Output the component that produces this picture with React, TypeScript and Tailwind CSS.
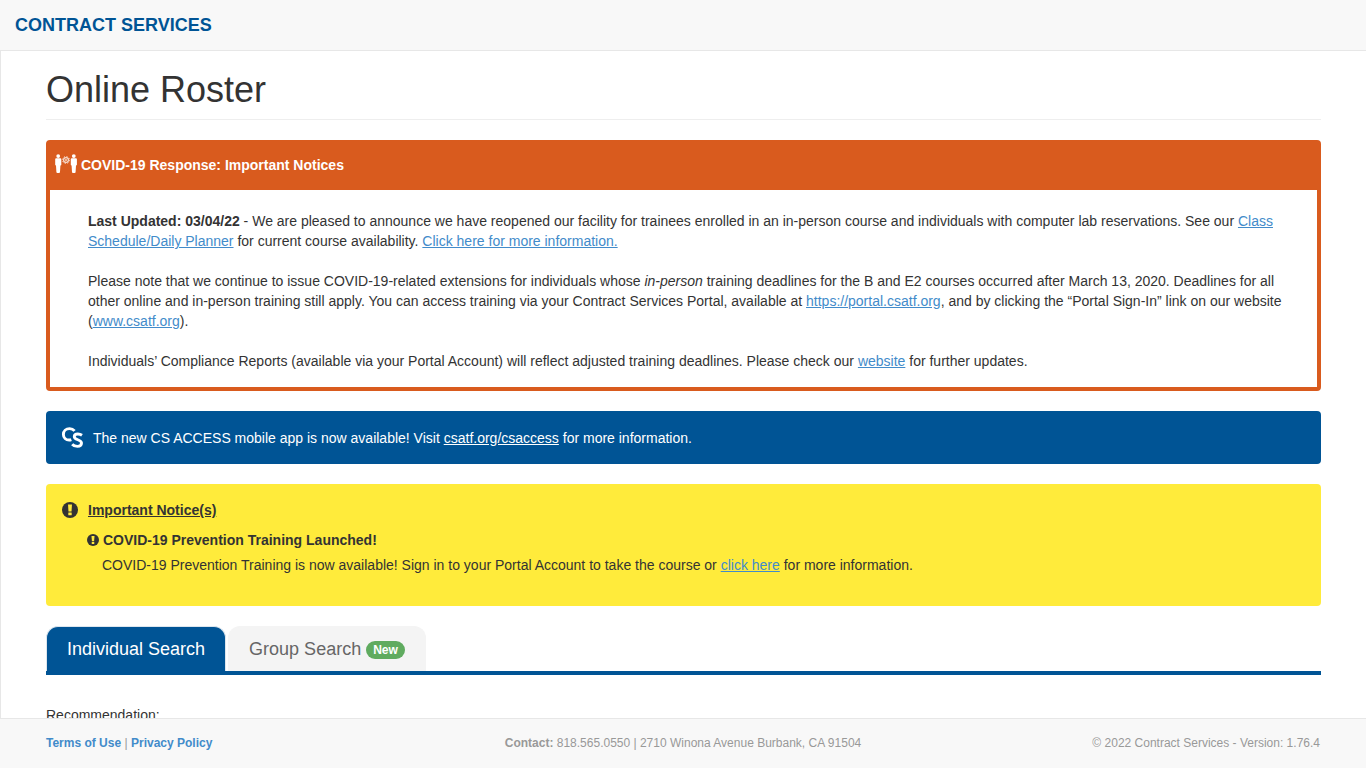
import { useState } from 'react';
import type { ReactNode } from 'react';

interface TextLinkProps {
  href: string;
  children: ReactNode;
}

function TextLink({ href, children }: TextLinkProps) {
  return (
    <a href={href} className="text-[#428bca] underline hover:text-[#2a6496]">
      {children}
    </a>
  );
}

function DistanceIcon() {
  return (
    <svg viewBox="0 0 22 22" className="w-[22px] h-[22px] shrink-0" fill="#fff" aria-hidden="true">
      <circle cx="3.2" cy="2.1" r="1.900" />
      <path d="M1.100 4.300h4.200q1 0 1 1v5.500q0 .8-.9.8L5 18q0 1-1 1H2.400q-1 0-1-1l-.4-6.400q-.8 0-.8-.8V5.300q0-1 .9-1z" />
      <circle cx="18.800" cy="2.1" r="1.900" />
      <path d="M16.700 4.300h4.200q1 0 1 1v5.500q0 .8-.9.8l-.4 6.400q0 1-1 1H18q-1 0-1-1l-.4-6.400q-.8 0-.8-.8V5.300q0-1 .9-1z" />
      <circle cx="11" cy="6" r="2.400" fill="none" stroke="#fff" strokeWidth="1.200" strokeOpacity="0.8" />
      <circle cx="11" cy="6" r=".9" fillOpacity="0.8" />
      <circle cx="11" cy="6" r="3.500" fill="none" stroke="#fff" strokeOpacity="0.7" strokeDasharray="1.300 1.450" />
    </svg>
  );
}

function CsLogo() {
  return (
    <svg
      viewBox="0 0 22 22"
      className="w-[22px] h-[22px] shrink-0"
      fill="none"
      stroke="#fff"
      strokeWidth="2.900"
      aria-hidden="true"
    >
      <path d="M13.600 3.900C12.200 2.300 10.600 1.600 8.600 1.600C4.900 1.600 2.400 4 2.400 7.400C2.400 10.900 4.900 13 8.200 13C9 13 9.600 12.900 10.300 12.600" />
      <path d="M21 8.300C19.700 7.400 18.300 7 16.900 7C14.600 7 13.300 8 13.300 9.700C13.300 13.400 20.500 12.100 20.500 16.100C20.500 18.400 18.700 19.400 16.400 19.400C14.300 19.400 12.500 18.700 11.200 17.200" />
    </svg>
  );
}

function ExclamationIcon({ className }: { className: string }) {
  return (
    <svg viewBox="0 0 16 16" className={className} aria-hidden="true">
      <circle cx="8" cy="8" r="8" fill="#333" />
      <path d="M6 2.600h4l-.5 6.800h-3z" fill="#ffeb3b" />
      <rect x="6.300" y="10.400" width="3.400" height="2.900" rx=".4" fill="#ffeb3b" />
    </svg>
  );
}

export default function App() {
  const [tab, setTab] = useState<'individual' | 'group'>('individual');

  const tabClass = (active: boolean) =>
    `flex items-center gap-[5px] px-5 py-2.5 text-lg leading-6 rounded-t-xl border border-b-0 cursor-pointer ${
      active ? 'bg-[#005495] border-[#dde6ee] text-white' : 'bg-[#f4f4f4] border-[#f4f4f4] text-[#666]'
    }`;

  return (
    <div className="h-screen flex flex-col bg-white text-[#333] text-sm leading-5 font-['Liberation_Sans',Arial,sans-serif]">
      {/* Top bar */}
      <header className="shrink-0 bg-[#f8f8f8] border-b border-[#e7e7e7] px-[15px] py-[15px]">
        <a href="#" className="block text-lg leading-5 font-bold text-[#005495]">
          CONTRACT SERVICES
        </a>
      </header>

      <main className="flex-1 min-h-0 overflow-y-auto [scrollbar-width:none] border-l border-[#e7e7e7] pl-[45px] pr-[45px] pt-[19px]">
        <h1 className="text-4xl leading-10 pb-[9px] mb-5 border-b border-[#eee]">Online Roster</h1>

        {/* COVID notice */}
        <section className="mb-5 rounded border-4 border-[#d95b1e]">
          <h2 className="flex items-center gap-1 h-[46px] pl-[5px] pb-1 bg-[#d95b1e] text-white font-bold">
            <DistanceIcon />
            <span>COVID-19 Response: Important Notices</span>
          </h2>
          <div className="pl-[38px] pr-[15px] pt-[21px] pb-4 space-y-5">
            <p>
              <b>Last Updated: 03/04/22</b> - We are pleased to announce we have reopened our facility for trainees
              enrolled in an in-person course and individuals with computer lab reservations. See our{' '}
              <TextLink href="#schedule">Class Schedule/Daily Planner</TextLink> for current course availability.{' '}
              <TextLink href="#more">Click here for more information.</TextLink>
            </p>
            <p>
              Please note that we continue to issue COVID-19-related extensions for individuals whose <i>in-person</i>{' '}
              training deadlines for the B and E2 courses occurred after March 13, 2020. Deadlines for all other online
              and in-person training still apply. You can access training via your Contract Services Portal, available
              at <TextLink href="https://portal.csatf.org">https://portal.csatf.org</TextLink>, and by clicking the
              “Portal Sign-In” link on our website (<TextLink href="https://www.csatf.org">www.csatf.org</TextLink>).
            </p>
            <p>
              Individuals’ Compliance Reports (available via your Portal Account) will reflect adjusted training
              deadlines. Please check our <TextLink href="https://www.csatf.org">website</TextLink> for further
              updates.
            </p>
          </div>
        </section>

        {/* Mobile app banner */}
        <section className="flex items-center gap-2.5 mb-5 px-[15px] pt-4 pb-[15px] rounded bg-[#005495] text-white">
          <CsLogo />
          <p>
            The new CS ACCESS mobile app is now available! Visit{' '}
            <a href="https://www.csatf.org/csaccess" className="underline">
              csatf.org/csaccess
            </a>{' '}
            for more information.
          </p>
        </section>

        <section className="mb-5 pl-4 pr-4 pt-4 pb-[31px] rounded bg-[#ffeb3b]">
          <h2 className="flex items-center gap-2.5 font-bold">
            <ExclamationIcon className="w-4 h-4 shrink-0" />
            <span className="underline">Important Notice(s)</span>
          </h2>
          <div className="pl-[25px] pt-2.5">
            <h3 className="flex items-center gap-1 font-bold">
              <ExclamationIcon className="w-3 h-3 shrink-0" />
              COVID-19 Prevention Training Launched!
            </h3>
            <p className="pl-[15px] pt-[5px]">
              COVID-19 Prevention Training is now available! Sign in to your Portal Account to take the course or{' '}
              <TextLink href="#prevention">click here</TextLink> for more information.
            </p>
          </div>
        </section>

        {/* Search tabs */}
        <div role="tablist" className="flex gap-0.5 mb-[30px] border-b-4 border-[#005495]">
          <button
            role="tab"
            aria-selected={tab === 'individual'}
            onClick={() => setTab('individual')}
            className={tabClass(tab === 'individual')}
          >
            Individual Search
          </button>
          <button
            role="tab"
            aria-selected={tab === 'group'}
            onClick={() => setTab('group')}
            className={tabClass(tab === 'group')}
          >
            Group Search
            <span className="mt-0.5 px-[7px] py-[3px] rounded-full bg-[#5fab5f] text-white text-xs leading-3 font-bold">
              New
            </span>
          </button>
        </div>

        <p>Recommendation:</p>
      </main>

      <footer className="shrink-0 grid grid-cols-3 items-center h-[50px] px-[46px] pb-0.5 bg-[#f8f8f8] border-t border-[#e7e7e7] text-xs text-[#999]">
        <nav>
          <a href="#terms" className="font-bold text-[#428bca]">
            Terms of Use
          </a>{' '}
          |{' '}
          <a href="#privacy" className="font-bold text-[#428bca]">
            Privacy Policy
          </a>
        </nav>
        <p className="text-center">
          <b>Contact:</b> 818.565.0550 | 2710 Winona Avenue Burbank, CA 91504
        </p>
        <p className="text-right">© 2022 Contract Services - Version: 1.76.4</p>
      </footer>
    </div>
  );
}
